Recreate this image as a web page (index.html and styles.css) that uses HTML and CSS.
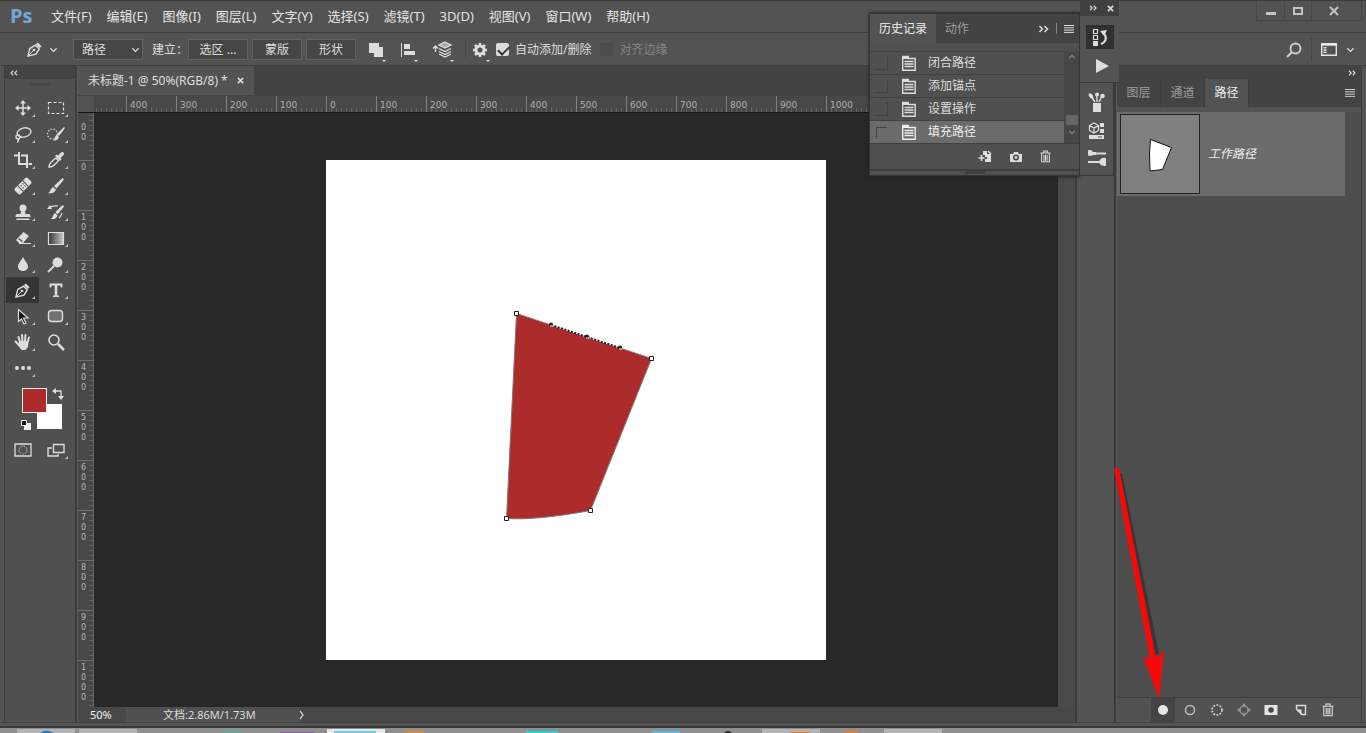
FILE: index.html
```
<!DOCTYPE html>
<html lang="zh-CN">
<head>
<meta charset="UTF-8" />
<meta name="viewport" content="width=device-width, initial-scale=1.0">
<title>未标题-1 @ 50%(RGB/8) *</title>
<link rel="stylesheet" href="styles.css">
</head>
<body>
<!-- shared icons -->
<svg class="defs" width="0" height="0">
<symbol id="i-down" viewBox="0 0 10 6"><path d="M1.5 1 5 4.5 8.5 1" fill="none" stroke="currentColor" stroke-width="1.4"/></symbol>
<symbol id="i-dbl" viewBox="0 0 10 8"><path d="M1 1l3 3-3 3M6 1l3 3-3 3" fill="none" stroke="currentColor" stroke-width="1.5"/></symbol>
<symbol id="i-menu" viewBox="0 0 10 8"><path d="M0 .5h10M0 2.8h10M0 5.1h10M0 7.4h10" stroke="currentColor" stroke-width="1"/></symbol>
<symbol id="i-close" viewBox="0 0 8 8"><path d="M1 1l6 6M7 1L1 7" stroke="currentColor" stroke-width="1.8"/></symbol>
<symbol id="i-doc" viewBox="0 0 16 16"><path d="M1.7 1.5h5.5v2h7v11.8H1.7z" fill="none" stroke="currentColor" stroke-width="1.4"/><path d="M1 1h7v3H1z" fill="currentColor"/><path d="M3.5 6.5h9M3.5 9h9M3.5 11.5h9" stroke="currentColor" stroke-width="1.4"/></symbol>
<symbol id="i-trash" viewBox="0 0 12 14"><path d="M.5 3.2h11M4 3V1h4v2M1.8 3.2v9.6h8.4V3.2M4.3 5v6.5M6 5v6.5M7.7 5v6.5" fill="none" stroke="currentColor" stroke-width="1.1"/></symbol>
<symbol id="i-pen" viewBox="0 0 18 18"><path d="M2 16l2-8 6-3.5 4 4L10.500 14z" fill="none" stroke="currentColor" stroke-width="1.5"/><path d="M10.500 3.500 12.500 1.500l4 4-2 2z" fill="currentColor"/><path d="M2 16l6-6" stroke="currentColor"/><circle cx="8.500" cy="9.500" r="1.400" fill="currentColor"/></symbol>
</svg>

<div class="app">
<header class="menubar">
<div class="logo">Ps</div>
<nav class="menus">
<a href="#">文件(F)</a>
<a href="#">编辑(E)</a>
<a href="#">图像(I)</a>
<a href="#">图层(L)</a>
<a href="#">文字(Y)</a>
<a href="#">选择(S)</a>
<a href="#">滤镜(T)</a>
<a href="#">3D(D)</a>
<a href="#">视图(V)</a>
<a href="#">窗口(W)</a>
<a href="#">帮助(H)</a>
</nav>
<div class="win-buttons">
<button aria-label="最小化"><svg width="12" height="10"><path d="M1 7.500h10" stroke="#c4c4c4" stroke-width="3"/></svg></button>
<button aria-label="最大化"><svg width="12" height="10"><path d="M2 2h8v6H2z" fill="none" stroke="#c4c4c4" stroke-width="2"/></svg></button>
<button class="wide" aria-label="关闭"><svg width="10" height="10"><path d="M1 1l8 8M9 1L1 9" stroke="#c4c4c4" stroke-width="2"/></svg></button>
</div>
</header>

<div class="options">
<button class="icon-btn tool-preset" aria-label="钢笔工具"><svg width="17" height="17"><use href="#i-pen"/></svg><svg width="9" height="6"><use href="#i-down"/></svg></button>
<div class="select">
<select aria-label="工具模式"><option>路径</option></select>
<svg width="9" height="6"><use href="#i-down"/></svg>
</div>
<span class="make">建立：</span>
<div class="make-buttons">
<button class="wide">选区 ...</button>
<button>蒙版</button>
<button>形状</button>
</div>
<div class="path-ops">
<button class="icon-btn drop" aria-label="路径操作"><svg width="16" height="16" fill="#ddd"><path d="M1 1h10v4h4v10H6v-4H1z"/></svg></button>
<button class="icon-btn drop" aria-label="路径对齐方式"><svg width="16" height="16"><path d="M1.500 1v14" stroke="#ddd"/><path d="M4 2h6v5H4zM4 9h11v4H4z" fill="#ddd"/></svg></button>
<button class="icon-btn drop" aria-label="路径排列方式"><svg width="20" height="17" fill="none" stroke="#ddd" stroke-width="1.300"><path d="M3.500 11V5M1 7.500 3.500 5 6 7.500"/><path d="M13 1l6 3-6 3-6-3z" fill="#aaa"/><path d="M7 7.500l6 3 6-3M7 10.500l6 3 6-3M7 13l6 3 6-3"/></svg></button>
</div>
<button class="icon-btn drop gear" aria-label="设置"><svg width="16" height="16"><circle cx="8" cy="8" r="4" fill="none" stroke="#ddd" stroke-width="3"/><path d="M8 1v3M8 12v3M1 8h3M12 8h3M3 3l2 2M11 11l2 2M3 13l2-2M11 5l2-2" stroke="#ddd" stroke-width="2.500"/></svg></button>
<label class="check"><input type="checkbox" checked>自动添加/删除</label>
<label class="check off"><input type="checkbox" disabled>对齐边缘</label>
<div class="options-right">
<button class="icon-btn" aria-label="搜索"><svg width="16" height="16" fill="none" stroke="#d0d0d0"><circle cx="9.500" cy="6.500" r="5" stroke-width="1.800"/><path d="M6 10l-5 5" stroke-width="2.200"/></svg></button>
<button class="icon-btn layout-menu" aria-label="工作区"><svg width="16" height="13"><path d="M.7.7h14.600v11.600H.7zM.7 2h14.600" fill="none" stroke="#e4e4e4" stroke-width="1.400"/><path d="M2.500 4h3v1.500h-3zM2.500 6.300h3v1.500h-3zM2.500 8.600h3v1.500h-3z" fill="#ddd"/></svg><svg width="9" height="6"><use href="#i-down"/></svg></button>
</div>
</div>

<main class="workspace">
<aside class="toolbox">
<div class="dock-head"><svg class="flip" width="8" height="6"><use href="#i-dbl"/></svg></div>
<div class="grip"></div>
<div class="tools">
<button aria-label="移动"><svg width="16" height="16" viewBox="0 0 16 16"><path d="M8 2v12M2 8h12" stroke="#ddd" stroke-width="1.500"/><path d="M8 0l3 3.500H5zM8 16l3-3.500H5zM0 8l3.500-3v6zM16 8l-3.500-3v6z" fill="#ddd"/></svg></button>
<button aria-label="矩形选框"><svg width="18" height="16"><path d="M1.500 2.500h15v11h-15z" fill="none" stroke="#ddd" stroke-width="1.200" stroke-dasharray="3 2"/></svg></button>
<button aria-label="套索"><svg width="18" height="17" fill="none" stroke="#ddd" stroke-width="1.400"><ellipse cx="10" cy="6.500" rx="7" ry="4.500" transform="rotate(-14 10 6.500)"/><circle cx="4" cy="11" r="2"/><path d="M4 13c1 1 0 3-1 3"/></svg></button>
<button aria-label="快速选择"><svg width="20" height="16"><circle cx="6.500" cy="8" r="5" fill="none" stroke="#ddd" stroke-width="1.200" stroke-dasharray="1.500 1.500"/><path d="M18 1l1 1-6 8-2-2z" fill="#ddd"/><path d="M10.500 8.500l2.500 2.500c-1 3-3 3.500-6 3.500 2-1 1.500-4 3.500-6z" fill="#ddd"/></svg></button>
<button aria-label="裁剪"><svg width="18" height="18" fill="none" stroke="#ddd" stroke-width="2"><path d="M5 1v12h9M0 4.500h4M7 4.500h6V17M14.500 13H18"/></svg></button>
<button aria-label="吸管"><svg width="18" height="18"><path d="M2 16c0-3 1-4 7-9l2.500 2.500c-5 5.500-6 6.500-9.500 6.500z" fill="none" stroke="#ddd" stroke-width="1.400"/><path d="M8 5l1.500-1.500 1.500 1 3-3c2-1.500 4 .5 2.500 2.500l-3 3 1 1.500L13 10z" fill="#ddd"/></svg></button>
<button aria-label="修复画笔"><svg width="20" height="18"><g transform="rotate(-45 10 9)"><rect x="1" y="5" width="18" height="8" rx="2" fill="#ddd"/><path d="M6.500 5v8M13.500 5v8" stroke="#505050"/><path d="M8.500 7.500h1M11 7.500h1M8.500 10.500h1M11 10.500h1" stroke="#505050" stroke-width="1.500"/></g></svg></button>
<button aria-label="画笔"><svg width="18" height="18"><path d="M15.500 1l1.500 1.500-7.500 9L7 9z" fill="#ddd"/><path d="M6 10l3 2.500c-1 3-4 4.500-8 3.500 3-1 2-4.500 5-6z" fill="#ddd"/></svg></button>
<button aria-label="仿制图章"><svg width="16" height="17" fill="#ddd"><circle cx="8" cy="4" r="3.500"/><path d="M6.500 6h3l1 4H14c1 0 1.500 1 1.500 3H.5C.5 11 1 10 2 10h3.500z"/><path d="M1.500 14.500h13V16h-13z"/></svg></button>
<button aria-label="历史记录画笔"><svg width="18" height="18"><path d="M15.500 2L17 3.500l-6.500 8L8.500 9z" fill="#ddd"/><path d="M8 10l2.500 2.500c-1 3-3 4-7 3.500 3-1 2-4.500 4.500-6z" fill="#ddd"/><path d="M2 5c4-3 6-2 9-2M15 10c-1 3-1.500 4-3 5" fill="none" stroke="#ddd" stroke-width="1.200"/><path d="M0 6l3-4 2 4z" fill="#ddd"/></svg></button>
<button aria-label="橡皮擦"><svg width="18" height="16"><path d="M9.500 2l5.500 4-6 7H5L2 10z" fill="#ddd"/><path d="M4.500 8.500l4 3" stroke="#505050" stroke-width="1.300"/><path d="M5 13.500h12" stroke="#ddd"/></svg></button>
<button aria-label="渐变"><svg width="18" height="15"><defs><linearGradient id="grad"><stop offset="0" stop-color="#333"/><stop offset="1" stop-color="#ccc"/></linearGradient></defs><path d="M1.500 1.500h15v12h-15z" fill="url(#grad)" stroke="#ddd" stroke-width="1.200"/></svg></button>
<button aria-label="模糊"><svg width="12" height="16"><path d="M6 1c2 4 5 6.500 5 9.500 0 6-10 6-10 0C1 7.500 4 5 6 1z" fill="#ddd"/></svg></button>
<button aria-label="减淡"><svg width="17" height="17"><circle cx="10.500" cy="6.500" r="5" fill="#ddd"/><path d="M7 10l-6 6" stroke="#ddd" stroke-width="1.800"/></svg></button>
<button class="active" aria-label="钢笔"><svg width="17" height="17"><use href="#i-pen"/></svg></button>
<button aria-label="文字"><svg width="16" height="16" fill="none" stroke="#ddd"><path d="M2.500 5.500V2.500h11v3" stroke-width="1.800"/><path d="M8 2.500V14" stroke-width="2.500"/><path d="M5 14.200h6" stroke-width="1.500"/></svg></button>
<button aria-label="路径选择"><svg width="14" height="17"><path d="M2.500 1.500v12l3-2.500 2.500 5 2-1-2.500-5H12z" fill="#111" stroke="#ddd" stroke-width="1.200"/></svg></button>
<button aria-label="圆角矩形"><svg width="17" height="14"><rect x="1.500" y="1.500" width="14" height="11" rx="3" fill="#707070" stroke="#ddd" stroke-width="1.400"/></svg></button>
<button aria-label="抓手"><svg width="18" height="18" fill="none" stroke="#ddd" stroke-width="2" stroke-linecap="round"><path d="M6 9L4.500 4M8.500 8L8 2M11 8l.5-6M13.500 9L15 4.500M5 12L1.500 8.500"/><path d="M6 9h7.500l-.5 4.500-2 2.500H8l-3-4z" fill="#ddd"/></svg></button>
<button class="plain" aria-label="缩放"><svg width="18" height="18" fill="none" stroke="#ddd"><circle cx="7" cy="7" r="5" stroke-width="1.600"/><path d="M11 11l6 6" stroke-width="2.500"/></svg></button>
<button aria-label="编辑工具栏"><svg width="18" height="6" fill="#ddd"><circle cx="3" cy="3" r="2"/><circle cx="9" cy="3" r="2"/><circle cx="15" cy="3" r="2"/></svg></button>
</div>
<svg class="swatches" width="66" height="54">
<rect x="30" y="17" width="25" height="25" fill="#fff"/>
<rect x="15.500" y="1.500" width="24" height="24" fill="#ac2c2c" stroke="#f0f0f0"/>
<path d="M48 4h6v6" fill="none" stroke="#ddd" stroke-width="1.300"/><path d="M45 4l4-3v6zM51 9h6l-3 4z" fill="#ddd"/>
<path d="M17 36h7v7h-7z" fill="#eee"/><path d="M14.500 33.500h5v5h-5z" fill="#111" stroke="#eee"/>
</svg>
<div class="modes">
<button class="plain" aria-label="快速蒙版"><svg width="18" height="14" fill="none" stroke="#ddd"><path d="M1 1h16v12H1z" stroke-width="1.300"/><circle cx="9" cy="7" r="4" stroke-dasharray="1.500 1.200"/></svg></button>
<button aria-label="屏幕模式"><svg width="18" height="14" fill="none" stroke="#ddd" stroke-width="1.400"><path d="M6.500 1.500h10.500v8H6.500z"/><path d="M5 5H1v8h10v-2"/></svg></button>
</div>
</aside>

<section class="document">
<div class="tabbar">
<div class="tab">未标题-1 @ 50%(RGB/8) *<button aria-label="关闭文档"><svg width="7" height="7"><use href="#i-close"/></svg></button></div>
</div>
<div class="ruler-top">
<div class="corner"></div>
<div class="ticks">
<span></span><span>400</span><span>300</span><span>200</span><span>100</span><span>0</span><span>100</span><span>200</span><span>300</span><span>400</span><span>500</span><span>600</span><span>700</span><span>800</span><span>900</span><span>1000</span><span></span><span></span><span></span><span></span>
</div>
</div>
<div class="stage">
<div class="ruler-left">
<span><br>0<br>0</span><span>0</span><span>1<br>0<br>0</span><span>2<br>0<br>0</span><span>3<br>0<br>0</span><span>4<br>0<br>0</span><span>5<br>0<br>0</span><span>6<br>0<br>0</span><span>7<br>0<br>0</span><span>8<br>0<br>0</span><span>9<br>0<br>0</span><span>1<br>0<br>0<br>0</span>
</div>
<div class="canvas">
<svg class="artboard" width="500" height="500">
<path d="M190.500 153.500L325.500 198.500L264.500 350.500Q210 360.500 180.500 358.500z" fill="#ac2c2c" stroke="#8a7474"/>
<path d="M225 165l69 23" stroke="#fff" stroke-width="1"/>
<path d="M225 165l69 23" stroke="#222" stroke-width="2" stroke-dasharray="2 1.500"/>
<g fill="#fff" stroke="#222"><path d="M188.500 151.500h4v4h-4zM323.500 196.500h4v4h-4zM262.500 348.500h4v4h-4zM178.500 356.500h4v4h-4z"/></g>
<g fill="#222"><circle cx="225" cy="164.500" r="2"/><circle cx="261" cy="176.500" r="2"/><circle cx="294" cy="187.500" r="2"/></g>
<path d="M224 166h3M260 178h3M293 189h3" stroke="#fff"/>
</svg>
</div>
<div class="scrollbar"></div>
</div>
<footer class="status">
<span class="zoom">50%</span>
<span class="doc-size">文档:2.86M/1.73M</span>
<svg width="6" height="10"><path d="M1 1l3 4-3 4" fill="none" stroke="#ccc" stroke-width="1.300"/></svg>
</footer>
</section>

<div class="dock-strip"></div>

<aside class="paths">
<div class="dock-head right"><svg width="8" height="6"><use href="#i-dbl"/></svg></div>
<div class="panel-tabs">
<button>图层</button>
<button>通道</button>
<button class="active">路径</button>
<svg class="menu-icon" width="10" height="8"><use href="#i-menu"/></svg>
</div>
<div class="path-list">
<div class="path-row">
<svg class="thumb" width="80" height="80"><rect x=".5" y=".5" width="79" height="79" fill="#808080" stroke="#222"/><path d="M30.500 25.500L51.500 33.500L42.500 55.500L30 57L29.500 39z" fill="#fff" stroke="#111"/></svg>
<em>工作路径</em>
</div>
</div>
<div class="path-actions">
<button class="active" aria-label="用前景色填充路径"><svg width="12" height="12"><circle cx="6" cy="6" r="5" fill="#e4e4e4"/></svg></button>
<button aria-label="用画笔描边路径"><svg width="12" height="12"><circle cx="6" cy="6" r="4.500" fill="none" stroke="#bbb" stroke-width="1.500"/></svg></button>
<button aria-label="将路径作为选区载入"><svg width="12" height="12"><circle cx="6" cy="6" r="5" fill="none" stroke="#ddd" stroke-width="1.500" stroke-dasharray="1.800 1.400"/></svg></button>
<button aria-label="从选区生成工作路径"><svg width="14" height="14"><circle cx="7" cy="7" r="4" fill="none" stroke="#999" stroke-width="1.300"/><path d="M7 0l2 3H5zM7 14l2-3H5zM0 7l3-2v4zM14 7l-3-2v4z" fill="#999"/></svg></button>
<button aria-label="添加蒙版"><svg width="14" height="12"><path d="M.5 1h13v10H.5z" fill="#e4e4e4"/><circle cx="7" cy="6" r="2.800" fill="#4a4a4a"/></svg></button>
<button class="new" aria-label="创建新路径"><svg width="12" height="12"><path d="M1.500 5V1.500h9v9H7z" fill="none" stroke="#ddd" stroke-width="1.400"/><path d="M1 5.500h5.500V11z" fill="#ddd"/></svg></button>
<button aria-label="删除当前路径"><svg width="12" height="14"><use href="#i-trash"/></svg></button>
</div>
</aside>
</main>
<div class="frame-bottom"></div>
<div class="taskbar">
<svg width="1366" height="5">
<path d="M17 1h58v4H17zM79 1h58v4H79zM762 1h58v4h-58zM884 1h58v4h-58z" fill="#b4b4b4"/>
<path d="M327 1h58v4h-58z" fill="#e8e8e8"/>
<path d="M40 5q6-5 14 0z" fill="#2a7fc0"/><path d="M334 3h42v2h-42z" fill="#70c8d8"/><path d="M404 3h20v2h-20z" fill="#d08a40"/><path d="M526 3h32v2h-32z" fill="#30d0cc"/><path d="M652 3h28v2h-28z" fill="#60b8e0"/><path d="M724 5q4-4 8 0z" fill="#222"/><path d="M790 4h20v1h-20zM844 3h14v2h-14z" fill="#e08030"/><path d="M280 4h34v1h-34z" fill="#8c58a0"/><path d="M222 3h20v2h-20z" fill="#60a898"/>
</svg>
</div>

<!-- history panel and its icon dock float above the workspace -->
<div class="floating">
<section class="history">
<div class="panel-tabs">
<button class="active">历史记录</button>
<button>动作</button>
<div class="tab-tools"><svg width="11" height="8"><use href="#i-dbl"/></svg><i></i><svg width="10" height="8"><use href="#i-menu"/></svg></div>
</div>
<div class="history-body">
<ul>
<li><i></i><svg width="16" height="16"><use href="#i-doc"/></svg>闭合路径</li>
<li><i></i><svg width="16" height="16"><use href="#i-doc"/></svg>添加锚点</li>
<li><i></i><svg width="16" height="16"><use href="#i-doc"/></svg>设置操作</li>
<li class="active"><i></i><svg width="16" height="16"><use href="#i-doc"/></svg>填充路径</li>
</ul>
<div class="history-scroll"><svg class="up" width="8" height="5"><use href="#i-down"/></svg><b></b><svg width="8" height="5"><use href="#i-down"/></svg></div>
</div>
<div class="history-actions">
<button aria-label="从当前状态创建新文档"><svg width="14" height="13"><path d="M5 1h4v3h4V12H7V9h2V7H7V5H5z" fill="#ddd"/><path d="M10 1l3 3" stroke="#ddd" stroke-width="1.500"/><path d="M3.500 5v6M.5 8h6" stroke="#ddd" stroke-width="1.600"/></svg></button>
<button aria-label="创建新快照"><svg width="14" height="12"><path d="M1 3h3l1-2h4l1 2h3v8H1z" fill="#ddd"/><circle cx="7" cy="6.500" r="2.200" fill="#ddd" stroke="#4a4a4a" stroke-width="1.500"/></svg></button>
<button aria-label="删除当前状态"><svg width="11" height="13"><use href="#i-trash"/></svg></button>
</div>
<div class="resize"></div>
</section>
<div class="icon-dock">
<div class="dock-top">
<div class="dock-controls"><svg width="8" height="6"><use href="#i-dbl"/></svg><svg width="7" height="7"><use href="#i-close"/></svg></div>
<button class="active" aria-label="历史记录"><svg width="16" height="18"><path d="M1.500 1.500h4v4h-4zM1.500 7.500h4v4h-4z" fill="none" stroke="#ddd" stroke-width="1.200"/><path d="M1 13h5v5H1z" fill="#ddd"/><path d="M9 16c5-2 6-6 3.500-10" fill="none" stroke="#ddd" stroke-width="2.200"/><path d="M8 3l7-1-3 6z" fill="#ddd"/></svg></button>
<button aria-label="动作"><svg width="16" height="16"><path d="M2 1l13 7-13 7z" fill="#ddd"/></svg></button>
</div>
<div class="dock-bottom">
<button aria-label="画笔"><svg width="18" height="22" fill="#ddd"><path d="M5 12h8v9H5z"/><path d="M7 11L3 5M9 11V5M11 11l3-6" stroke="#ddd" stroke-width="1.400"/><ellipse cx="3" cy="5" rx="1.800" ry="3" transform="rotate(-35 3 5)"/><circle cx="9" cy="3.500" r="2"/><circle cx="14.500" cy="5" r="2.300"/></svg></button>
<button aria-label="库"><svg width="18" height="18"><path d="M6 1l4.500 2.500v5L6 11 1.500 8.500v-5zM1.500 3.500L6 6l4.500-2.500M6 6v5" fill="none" stroke="#ddd" stroke-width="1.200"/><path d="M12 1h4v4h-4zM12 7h4v4h-4zM1 13h15v4H1z" fill="#ddd"/><path d="M10 15h4" stroke="#505050"/></svg></button>
<button aria-label="属性"><svg width="20" height="18"><path d="M8 4.500h11M1 13h12" stroke="#ddd" stroke-width="2.200"/><path d="M1 1.500c3-1 4 0 5 1.500h3v3H6C5 7 3 7 1 6.500zM19 9c-4-1-6 1-7 4 1 3 3 4 7 4z" fill="#ddd"/></svg></button>
</div>
</div>
</div>

<svg class="arrow" width="64" height="240">
<path d="M11 12l37 180" stroke="#222" stroke-width="4" opacity=".5"/>
<path d="M5 6h5l37 190 8-7-5 48-16-43 7 3z" fill="#f80808"/>
</svg>
</div>
</body>
</html>
```
FILE: styles.css
```
* {
  box-sizing: border-box;
}
body {
  margin: 0;
  font-family: "Noto Sans", "Noto Sans CJK SC", sans-serif;
  font-size: 12px;
  line-height: 16px;
  color: #ddd;
  background: #535353;
}
button, select {
  font: inherit;
  color: inherit;
  background: none;
  border: 0;
  padding: 0;
}
svg {
  display: block;
  flex: none;
}
.defs {
  position: absolute;
}
.app {
  position: relative;
  display: flex;
  flex-direction: column;
  height: 100vh;
  overflow: hidden;
}

/* menu bar */
.menubar {
  display: flex;
  align-items: center;
  height: 33px;
  padding: 0 0 2px 10px;
  border-top: 1px solid #3c3c3c;
  border-bottom: 1px solid #3e3e3e;
}
.logo {
  width: 41px;
  color: #74a5d6;
  font-family: "Open Sans", sans-serif;
  font-size: 20px;
  font-weight: 700;
  line-height: 24px;
}
.menus {
  display: flex;
  gap: 15px;
  font-size: 13px;
}
.menus a {
  color: #e4e4e4;
  text-decoration: none;
  white-space: nowrap;
}
.win-buttons {
  display: flex;
  align-self: flex-start;
  margin-left: auto;
  margin-right: 4px;
  border: 1px solid #464646;
  border-top: 0;
}
.win-buttons button {
  width: 27px;
  height: 19px;
  display: grid;
  place-items: center;
}
.win-buttons button + button {
  border-left: 1px solid #464646;
}
.win-buttons .wide {
  width: 50px;
  padding-right: 6px;
}

/* options bar */
.options {
  display: flex;
  align-items: center;
  height: 33px;
  padding: 1px 0 0 26px;
  border-bottom: 1px solid #3e3e3e;
}
.icon-btn {
  position: relative;
  display: flex;
  align-items: center;
  color: #ddd;
}
.tool-preset {
  gap: 6px;
  margin-right: 15px;
}
.drop::after {
  content: "";
  position: absolute;
  right: -2px;
  bottom: -4px;
  border: 2px solid transparent;
  border-top-color: #ddd;
  border-bottom: 0;
}
.select {
  position: relative;
  width: 70px;
  margin-right: 9px;
}
.select select {
  width: 100%;
  height: 21px;
  padding-left: 8px;
  appearance: none;
  background: #464646;
  border: 1px solid #646464;
}
.select svg {
  position: absolute;
  right: 3px;
  top: 8px;
}
.make {
  width: 36px;
  white-space: nowrap;
}
.make-buttons {
  display: flex;
  gap: 4px;
}
.make-buttons button {
  width: 50px;
  height: 21px;
  background: #464646;
  border: 1px solid #626262;
}
.make-buttons .wide {
  width: 60px;
}
.path-ops {
  display: flex;
  align-items: center;
  gap: 16px;
  margin-left: 12px;
  padding-right: 13px;
  border-right: 1px solid #464646;
}
.gear {
  margin: 0 8px 0 6px;
}
.check {
  display: flex;
  align-items: center;
  gap: 6px;
}
.check input {
  appearance: none;
  position: relative;
  width: 13px;
  height: 13px;
  margin: 0;
  background: #ddd;
  border-radius: 2px;
}
.check input:checked::after {
  content: "";
  position: absolute;
  left: 4px;
  top: 1px;
  width: 5px;
  height: 9px;
  border: solid #333;
  border-width: 0 2px 2px 0;
  transform: rotate(45deg);
}
.check.off {
  margin-left: 9px;
  color: #858585;
}
.check.off input {
  background: #4b4b4b;
}
.options-right {
  display: flex;
  align-items: center;
  gap: 9px;
  margin-left: auto;
  padding-right: 11px;
}
.layout-menu {
  gap: 9px;
  height: 24px;
  padding-left: 9px;
  border-left: 1px solid #464646;
}

/* workspace */
.workspace {
  display: flex;
  flex: 1;
  min-height: 0;
  margin: 0 4px;
}
.dock-head {
  display: flex;
  align-items: center;
  height: 13px;
  padding: 0 5px;
  background: #434343;
}
.dock-head.right {
  justify-content: flex-end;
}
.flip {
  transform: scaleX(-1);
}
.toolbox {
  width: 73px;
  flex: none;
  border-left: 1px solid #3e3e3e;
  border-right: 2px solid #3e3e3e;
  background: #505050;
}
.grip {
  width: 22px;
  height: 3px;
  margin: 4px auto 9px;
  background: #484848;
}
.tools, .modes {
  display: grid;
  grid-template-columns: 33px 33px;
  grid-auto-rows: 26px;
  padding-left: 1px;
}
.tools button, .modes button {
  position: relative;
  display: grid;
  place-items: center;
}
.tools button::after, .modes button::after {
  content: "";
  position: absolute;
  right: 4px;
  bottom: 4px;
  border-left: 3px solid transparent;
  border-bottom: 3px solid #bbb;
}
.tools .plain::after, .modes .plain::after {
  display: none;
}
.tools .active {
  background: #343434;
}
.swatches {
  margin: 6px 0 0 2px;
}
.modes {
  margin-top: -4px;
}

/* document window */
.document {
  flex: 1;
  min-width: 0;
  display: flex;
  flex-direction: column;
  border-left: 1px solid #5a5a5a;
}
.tabbar {
  height: 30px;
  flex: none;
  display: flex;
  padding-bottom: 1px;
  background: #434343;
}
.tab {
  display: flex;
  align-items: center;
  gap: 9px;
  padding: 0 10px;
  white-space: nowrap;
  background: #535353;
}
.ruler-top {
  height: 17px;
  flex: none;
  display: flex;
  margin-right: 17px;
  background: #484848;
  border-bottom: 1px solid #151515;
  font-family: "DejaVu Sans", sans-serif;
  font-size: 9px;
  line-height: 18px;
  color: #b0b0b0;
}
.corner {
  width: 16px;
  flex: none;
  background: #535353;
}
.ticks {
  flex: 1;
  min-width: 0;
  display: flex;
  justify-content: center;
  overflow: hidden;
}
.ticks span {
  width: 50px;
  flex: none;
  padding-left: 3px;
  border-left: 1px solid #808080;
  background: repeating-linear-gradient(90deg, transparent 0 4px, #626262 4px 5px) bottom / 100% 4px no-repeat;
}
.stage {
  flex: 1;
  min-height: 0;
  display: flex;
}
.ruler-left {
  width: 16px;
  flex: none;
  display: flex;
  flex-direction: column;
  justify-content: center;
  overflow: hidden;
  background: #484848;
  border-right: 1px solid #666;
  font-family: "DejaVu Sans", sans-serif;
  font-size: 8px;
  line-height: 10px;
  color: #b8b8b8;
}
.ruler-left span {
  height: 50px;
  flex: none;
  padding: 2px 0 0 3px;
  border-top: 1px solid #707070;
  background: repeating-linear-gradient(transparent 0 4px, #626262 4px 5px) right / 4px 100% no-repeat;
}
.canvas {
  flex: 1;
  min-width: 0;
  display: grid;
  place-content: center;
  overflow: hidden;
  background: #282828;
}
.artboard {
  background: #fff;
}
.scrollbar {
  width: 17px;
  flex: none;
  background: #4a4a4a;
}
.status {
  height: 15px;
  flex: none;
  display: flex;
  align-items: center;
  font-size: 11px;
  background: #484848;
}
.zoom {
  width: 48px;
  padding-left: 12px;
  color: #eee;
}
.doc-size {
  width: 173px;
  padding-left: 37px;
  background: #505050;
}

/* docks on the right */
.dock-strip {
  width: 41px;
  flex: none;
  border: solid #3a3a3a;
  border-width: 0 2px;
  background: #535353;
}
.paths {
  width: 246px;
  flex: none;
  display: flex;
  flex-direction: column;
  border-left: 1px solid #5a5a5a;
  border-right: 1px solid #3e3e3e;
  background: #4d4d4d;
}
.panel-tabs {
  display: flex;
  align-items: center;
  background: #434343;
  color: #9c9c9c;
}
.panel-tabs button {
  align-self: stretch;
  border-right: 1px solid #3c3c3c;
}
.panel-tabs .active {
  color: #eee;
  background: #535353;
}
.paths .panel-tabs {
  height: 28px;
}
.paths .panel-tabs button {
  width: 44px;
}
.menu-icon {
  margin-left: auto;
  margin-right: 6px;
  color: #ccc;
}
.path-list {
  flex: 1;
  border-top: 5px solid #535353;
  padding-right: 16px;
}
.path-row {
  display: flex;
  align-items: center;
  gap: 8px;
  height: 84px;
  padding-left: 3px;
  background: #6b6b6b;
  color: #eee;
}
.path-actions {
  display: flex;
  align-items: center;
  justify-content: flex-end;
  gap: 3px;
  height: 25px;
  padding-right: 21px;
  border-top: 1px solid #404040;
  background: #525252;
}
.path-actions button {
  width: 24px;
  height: 24px;
  display: grid;
  place-items: center;
}
.path-actions .active {
  background: #444;
}
.path-actions .new {
  margin-left: 3px;
}
.frame-bottom {
  height: 6px;
  flex: none;
  border-top: 1px solid #444;
  border-bottom: 2px solid #383838;
}
.taskbar {
  height: 5px;
  flex: none;
  overflow: hidden;
  background: #8f8f8f;
}

/* floating panels */
.floating {
  position: absolute;
  top: 0;
  right: 247px;
  display: flex;
  align-items: flex-start;
}
.history {
  width: 211px;
  margin-top: 12px;
  border: 1px solid #353535;
  border-top-width: 2px;
  background: #505050;
  box-shadow: 0 1px 3px #222;
}
.history .panel-tabs {
  height: 29px;
}
.history .panel-tabs button {
  padding: 0 9px;
  border: 0;
}
.tab-tools {
  display: flex;
  align-items: center;
  gap: 7px;
  margin-left: auto;
  margin-right: 5px;
  color: #ddd;
}
.tab-tools i {
  width: 1px;
  height: 11px;
  background: #888;
}
.history-body {
  display: flex;
  padding-top: 8px;
}
.history ul {
  flex: 1;
  margin: 0;
  padding: 0;
  list-style: none;
}
.history li {
  display: flex;
  align-items: center;
  height: 23px;
  border-top: 1px solid #404040;
}
.history li i {
  width: 14px;
  height: 14px;
  margin: 0 13px 0 4px;
  border: solid #424242;
  border-width: 0 1px 1px 0;
}
.history li svg {
  margin-right: 11px;
}
.history .active {
  background: #6b6b6b;
  color: #eee;
}
.history .panel-tabs .active {
  background: #535353;
}
.history li.active i {
  width: 11px;
  height: 11px;
  margin: 0 14px 0 6px;
  border-width: 1px 0 0 1px;
}
.history-scroll {
  width: 15px;
  display: flex;
  flex-direction: column;
  align-items: center;
  padding: 3px 0 8px;
  background: #464646;
  color: #888;
}
.up {
  transform: scaleY(-1);
}
.history-scroll b {
  width: 12px;
  height: 10px;
  margin: auto 0 5px;
  background: #666;
}
.history-actions {
  display: flex;
  align-items: center;
  justify-content: flex-end;
  gap: 17px;
  height: 26px;
  padding-right: 28px;
  border-top: 1px solid #404040;
}
.resize {
  height: 6px;
  border-top: 2px solid #3e3e3e;
}
.resize::before {
  content: "";
  display: block;
  width: 20px;
  height: 3px;
  margin: 0 auto;
  background: #404040;
}
.icon-dock button {
  display: grid;
  place-items: center;
}
.dock-top {
  width: 39px;
  height: 83px;
  padding-left: 6px;
  background: #535353;
  border-bottom: 1px solid #3a3a3a;
}
.dock-controls {
  display: flex;
  align-items: center;
  justify-content: space-between;
  height: 16px;
  margin-left: -6px;
  padding: 0 5px 0 9px;
  background: #404040;
}
.dock-top button {
  width: 28px;
  height: 24px;
  margin-top: 9px;
}
.dock-top .active {
  background: #303030;
}
.dock-top button + button {
  width: 32px;
  margin-top: 5px;
}
.dock-bottom {
  width: 34px;
  height: 93px;
  display: flex;
  flex-direction: column;
  align-items: center;
  justify-content: space-around;
  padding: 3px 0;
  background: #535353;
  border: solid #3a3a3a;
  border-width: 0 1px 1px 0;
}

/* pointer to the fill button */
.arrow {
  position: absolute;
  right: 193px;
  bottom: 31px;
}
```
